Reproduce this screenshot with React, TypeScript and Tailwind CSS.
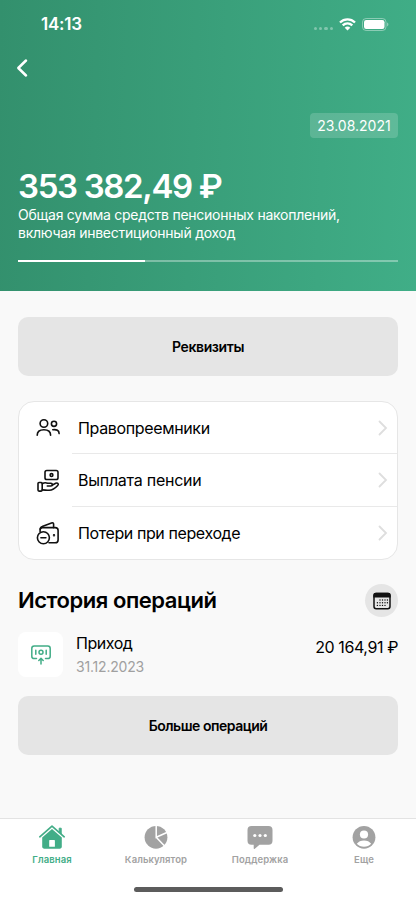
import type { ReactNode } from 'react'

type MenuItem = {
  label: string
  icon: ReactNode
  labelClass: string
}

type TabItem = {
  label: string
  icon: ReactNode
  active?: boolean
}

const PeopleIcon = () => (
  <svg width="24" height="24" viewBox="0 0 24 24" fill="none" stroke="#111" strokeWidth="1.6" strokeLinecap="round">
    <circle cx="7.9" cy="7.5" r="3.8" />
    <circle cx="18" cy="7.8" r="2.6" />
    <path d="M1.2 19.3c0-3.8 2.7-5.6 6.7-5.6s6.7 1.8 6.7 5.6" />
    <path d="M16.800 13.700c3.900-.5 6.300.7 6.300 3.900" />
  </svg>
)

const PayoutIcon = () => (
  <svg width="24" height="24" viewBox="0 0 24 24" fill="none" stroke="#111" strokeWidth="1.6" strokeLinecap="round" strokeLinejoin="round">
    <rect x="9" y="1.5" width="13" height="9" rx="1.8" />
    <circle cx="15.5" cy="6" r="1.4" />
    <rect x="2" y="13.5" width="4.2" height="8.6" rx="1" />
    <path d="M6.200 14.700c2-1.200 3.700-1.300 5.400-.4h3.300c2 0 2 2.700 0 2.700h-3.600" />
    <path d="M16 16.200l3.700-1.900c2-.9 3.400.8 2 2.200-3 3.200-5 4.600-8.500 4.800-2.500.1-4.500-.4-7-.4" />
  </svg>
)

const WalletIcon = () => (
  <svg width="24" height="24" viewBox="0 0 24 24" fill="none" stroke="#111" strokeWidth="1.6" strokeLinecap="round" strokeLinejoin="round">
    <path d="M4.100 10.800V8.900c0-1.400.9-2.300 2.300-2.300h12.800c1.800 0 2.900 1.100 2.900 2.900v9.400c0 1.800-1.100 2.900-2.900 2.900h-6.200" />
    <path d="M4.200 8.300c0-1.500.6-2.300 2-2.800l9.300-3.600c1.200-.4 2.100.2 2.100 1.400v3.300" />
    <circle cx="7.400" cy="16.700" r="6" />
    <path d="M4.900 16.700h5" />
    <circle cx="18" cy="14.300" r=".4" fill="#111" />
  </svg>
)

const IncomeIcon = () => (
  <svg width="22" height="22" viewBox="0 0 22 22" fill="none" stroke="#42ad87" strokeWidth="1.5" strokeLinecap="round" strokeLinejoin="round">
    <path d="M6.500 14.600H4.200c-1.500 0-2.400-.9-2.400-2.400V4.400C1.800 2.900 2.700 2 4.200 2h13.600c1.500 0 2.400.9 2.400 2.400v7.800c0 1.500-.9 2.400-2.400 2.400h-2.300" />
    <circle cx="11" cy="8.200" r="2" />
    <path d="M5.800 6.200v4M16.200 6.200v4" />
    <path d="M11 20v-5M8.800 16.500L11 14.300l2.200 2.200" />
  </svg>
)

const CalendarIcon = () => (
  <svg width="18" height="18" viewBox="0 0 18 18">
    <rect x="1" y="1.500" width="16" height="15.200" rx="2.200" fill="none" stroke="#111" strokeWidth="1.500" />
    <path d="M.3 5.500V3.200A2.400 2.400 0 0 1 2.700.8h12.600a2.400 2.400 0 0 1 2.400 2.400v2.300z" fill="#111" />
    <path
      d="M7 8h.01M9.500 8h.01M12 8h.01M14.400 8h.01M4.400 10.700h.01M7 10.700h.01M9.500 10.700h.01M12 10.700h.01M14.400 10.700h.01M4.400 13.400h.01M7 13.400h.01M9.500 13.400h.01M12 13.400h.01"
      stroke="#111"
      strokeWidth="1.400"
      strokeLinecap="round"
    />
  </svg>
)

const HomeIcon = () => (
  <svg width="28" height="26" viewBox="0 0 28 26">
    <path d="M1.800 12.800L14 2.200l12.200 10.600" fill="none" stroke="currentColor" strokeWidth="1.700" strokeLinecap="round" strokeLinejoin="round" />
    <path d="M21.200 8.200V4.200h2v5.800z" fill="currentColor" stroke="currentColor" strokeLinejoin="round" />
    <path d="M14 4.900l9.800 8.500v9.200c0 1.300-.8 2.100-2.100 2.100H6.300c-1.300 0-2.100-.8-2.100-2.100v-9.200z" fill="currentColor" />
    <rect x="11.200" y="16" width="5.700" height="6.800" rx=".4" fill="#fff" />
  </svg>
)

const PieIcon = () => (
  <svg width="28" height="26" viewBox="0 0 28 26">
    <circle cx="14" cy="13.300" r="11.400" fill="currentColor" />
    <path d="M14.200 1v12.300L26 8M14.200 13.300l8.600 9" fill="none" stroke="#fff" strokeWidth="1.500" />
  </svg>
)

const ChatIcon = () => (
  <svg width="28" height="26" viewBox="0 0 28 26">
    <path d="M5.500 2h17a4 4 0 0 1 4 4v10.800a4 4 0 0 1-4 4h-9L8.800 24.800c-.6.500-1.100.3-1.100-.5v-3.500H5.500a4 4 0 0 1-4-4V6a4 4 0 0 1 4-4z" fill="currentColor" />
    <circle cx="8.800" cy="11.500" r="1.600" fill="#fff" />
    <circle cx="14" cy="11.500" r="1.600" fill="#fff" />
    <circle cx="19.300" cy="11.500" r="1.600" fill="#fff" />
  </svg>
)

const ProfileIcon = () => (
  <svg width="28" height="26" viewBox="0 0 28 26">
    <circle cx="14" cy="13.300" r="11.400" fill="currentColor" />
    <circle cx="14" cy="10.500" r="4.100" fill="#fff" />
    <path d="M6.800 19.800c1.500-2.300 4.200-3.400 7.200-3.400s5.700 1.100 7.200 3.400c-1.800 1.900-4.300 3-7.200 3s-5.400-1.100-7.200-3z" fill="#fff" />
  </svg>
)

const menuItems: MenuItem[] = [
  { label: 'Правопреемники', icon: <PeopleIcon />, labelClass: 'tracking-[-0.35px]' },
  { label: 'Выплата пенсии', icon: <PayoutIcon />, labelClass: 'tracking-[-0.25px]' },
  { label: 'Потери при переходе', icon: <WalletIcon />, labelClass: 'tracking-[-0.4px]' },
]

const tabs: TabItem[] = [
  { label: 'Главная', icon: <HomeIcon />, active: true },
  { label: 'Калькулятор', icon: <PieIcon /> },
  { label: 'Поддержка', icon: <ChatIcon /> },
  { label: 'Еще', icon: <ProfileIcon /> },
]

const StatusBar = () => (
  <div className="flex h-12 items-center justify-between pl-[41px] pr-[27px]">
    <span className="text-[17px] font-semibold leading-none tracking-[-0.2px]">14:13</span>
    <div className="flex items-center">
      <div className="mt-[9px] flex gap-[2px] opacity-35">
        <i className="size-[3.300px] rounded-full bg-white" />
        <i className="size-[3.300px] rounded-full bg-white" />
        <i className="size-[3.300px] rounded-full bg-white" />
        <i className="size-[3.300px] rounded-full bg-white" />
      </div>
      <svg className="ml-[6px]" width="17" height="13" viewBox="0 0 17 13" fill="none" stroke="#fff" strokeWidth="2.300">
        <path d="M1 4.500c4.300-4.200 10.700-4.200 15 0M3.700 7.400c2.800-2.600 6.800-2.600 9.600 0" />
        <path d="M8.500 12.500L5.700 9.700c1.600-1.500 4-1.500 5.600 0z" fill="#fff" stroke="none" />
      </svg>
      <svg className="ml-[6px]" width="27" height="13" viewBox="0 0 27 13">
        <rect x=".5" y=".5" width="23.500" height="12" rx="3.600" fill="none" stroke="#fff" strokeOpacity=".4" />
        <rect x="2" y="2" width="20.500" height="9" rx="2.200" fill="#fff" />
        <path d="M25.200 4.600c1.600.7 1.600 3.100 0 3.800z" fill="#fff" fillOpacity=".5" />
      </svg>
    </div>
  </div>
)

const App = () => {
  return (
    <div className="flex h-[900px] w-[416px] flex-col overflow-hidden bg-[#f9f9f9] font-['Inter',sans-serif] text-black">
      {/* Balance header */}
      <header className="flex h-[291px] shrink-0 flex-col bg-linear-[92deg] from-[#33906d] to-[#40ae87] text-white">
        <StatusBar />
        <button className="ml-4 mt-[10px] h-5 w-3">
          <svg width="12" height="20" viewBox="0 0 12 20" fill="none" stroke="#fff" strokeWidth="2.500" strokeLinecap="round" strokeLinejoin="round">
            <path d="M10 2.500L2.300 10l7.700 7.500" />
          </svg>
        </button>

        <div className="mr-[18px] mt-[35px] flex h-[25px] w-[88px] items-center justify-center self-end rounded-[4px] bg-white/17 text-[14px]">
          <span>23.08.2021</span>
        </div>

        <div className="mx-[18px] mt-[28px]">
          <h1 className="whitespace-nowrap text-[33px] font-semibold leading-10 tracking-[-1.35px]">353 382,49 ₽</h1>
          <p className="whitespace-nowrap text-[14px] leading-[17.500px] tracking-[-0.25px]">
            Общая сумма средств пенсионных накоплений,
            <br />
            включая инвестиционный доход
          </p>
          <div className="mt-[19px] h-[2px] bg-white/35">
            <div className="h-full w-1/3 bg-white" />
          </div>
        </div>
      </header>

      <main className="flex flex-1 flex-col px-[18px] pt-[26px]">
        <button className="h-[59px] shrink-0 rounded-[10px] bg-[#e5e5e5] text-[14px] font-semibold tracking-[-0.4px]">
          Реквизиты
        </button>

        <div className="mt-[25px] grid h-[159px] shrink-0 grid-rows-[52px_53px_52px] rounded-[16px] border border-[#e6e6e6] bg-white">
          {menuItems.map((item, i) => (
            <div key={item.label} className="flex items-center pl-[17px]">
              <span className="w-9 shrink-0">{item.icon}</span>
              <div
                className={
                  i < menuItems.length - 1
                    ? 'flex h-full flex-1 items-center justify-between border-b border-[#e9e9e9] pl-[6px] pr-[9px]'
                    : 'flex h-full flex-1 items-center justify-between pl-[6px] pr-[9px]'
                }
              >
                <span className={`whitespace-nowrap text-[16px] ${item.labelClass}`}>{item.label}</span>
                <svg width="10" height="16" viewBox="0 0 10 16" fill="none" stroke="#dedede" strokeWidth="1.800" strokeLinecap="round">
                  <path d="M1.500 1.500L8 8l-6.500 6.500" />
                </svg>
              </div>
            </div>
          ))}
        </div>

        {/* Operations history */}
        <div className="mt-[24px] flex items-center justify-between">
          <h2 className="whitespace-nowrap text-[22px] font-semibold tracking-[-0.45px]">История операций</h2>
          <button className="flex size-[33px] items-center justify-center rounded-full bg-[#e5e5e5]">
            <CalendarIcon />
          </button>
        </div>

        <div className="mt-[15px] flex h-[45px] shrink-0">
          <div className="flex size-[45px] items-center justify-center rounded-[8px] bg-white">
            <IncomeIcon />
          </div>
          <div className="ml-[13px] flex-1">
            <p className="text-[16px] leading-[23px] tracking-[-0.45px]">Приход</p>
            <p className="text-[14px] leading-[23px] tracking-[-0.2px] text-[#a0a0a0]">31.12.2023</p>
          </div>
          <span className="whitespace-nowrap text-[16px] leading-[30px] tracking-[-0.4px]">20 164,91 ₽</span>
        </div>

        <button className="mt-[19px] h-[59px] shrink-0 rounded-[10px] bg-[#e5e5e5] text-[14px] font-semibold tracking-[-0.48px]">
          Больше операций
        </button>
      </main>

      {/* Bottom tabs */}
      <nav className="flex h-[82px] shrink-0 flex-col items-center border-t border-[#e3e3e3] bg-white">
        <div className="flex w-full pt-[5px]">
          {tabs.map((tab) => (
            <div
              key={tab.label}
              className={
                tab.active
                  ? 'flex flex-1 flex-col items-center text-[#42ad87]'
                  : 'flex flex-1 flex-col items-center text-[#a2a2a2]'
              }
            >
              {tab.icon}
              <span className="mt-[3px] text-[9.500px] font-semibold leading-[13px] tracking-[0.1px]">{tab.label}</span>
            </div>
          ))}
        </div>
        <div className="mt-[21px] h-[5px] w-[149px] rounded-full bg-[#5c5c5c]" />
      </nav>
    </div>
  )
}

export default App
